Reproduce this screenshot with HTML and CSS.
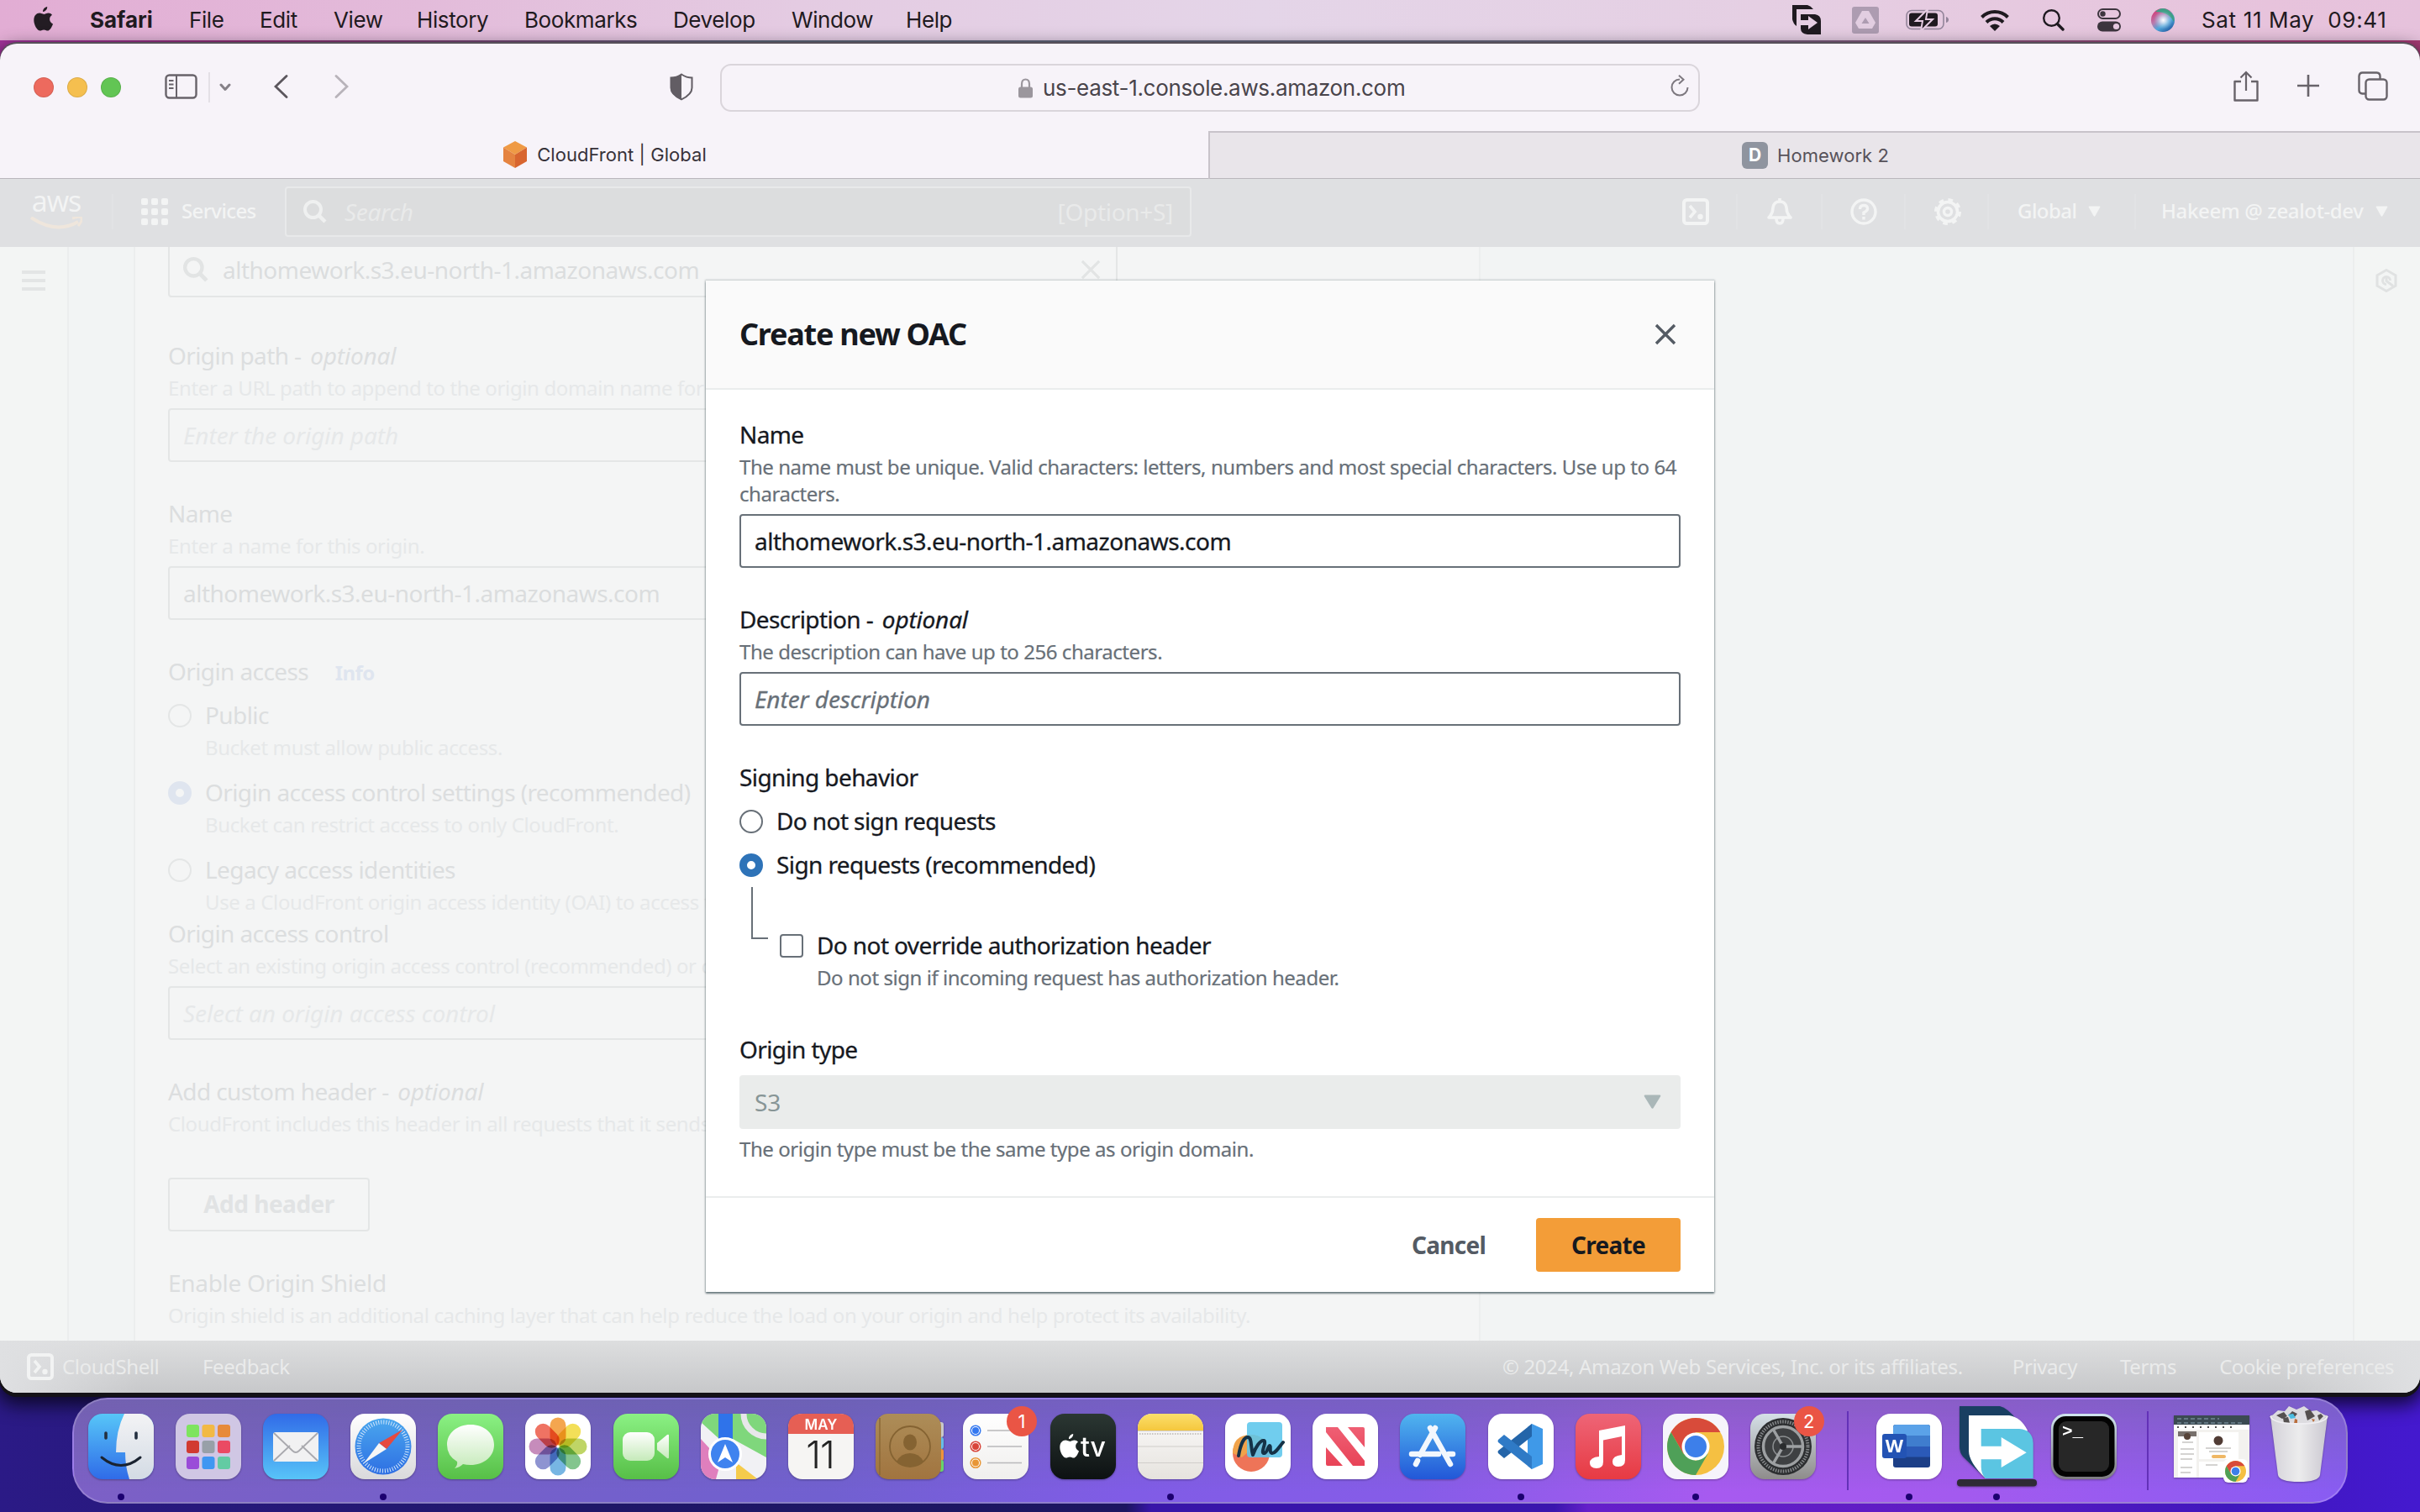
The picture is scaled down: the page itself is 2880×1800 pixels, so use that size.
FILE: index.html
```html
<!DOCTYPE html>
<html lang="en">
<head>
<meta charset="utf-8">
<title>CloudFront | Global</title>
<link rel="stylesheet" href="styles.css">
</head>
<body>
<svg width="0" height="0" class="defs">
  <defs>
    <linearGradient id="gFinder" x2="0" y2="1"><stop stop-color="#57c6f8"/><stop offset="1" stop-color="#2f6be8"/></linearGradient>
    <linearGradient id="gFinder2" x2="0" y2="1"><stop stop-color="#f3f3f5"/><stop offset="1" stop-color="#d3dbe4"/></linearGradient>
    <linearGradient id="gMail" x2="0" y2="1"><stop stop-color="#316be8"/><stop offset="1" stop-color="#58c4f8"/></linearGradient>
    <linearGradient id="gGreen" x2="0" y2="1"><stop stop-color="#8bf184"/><stop offset="1" stop-color="#57bf47"/></linearGradient>
    <linearGradient id="gWhite" x2="0" y2="1"><stop stop-color="#ffffff"/><stop offset="1" stop-color="#d9d9db"/></linearGradient>
    <linearGradient id="gPaper" x2="0" y2="1"><stop stop-color="#ffffff"/><stop offset="1" stop-color="#f0efed"/></linearGradient>
    <linearGradient id="gBubble" x2="0" y2="1"><stop stop-color="#ffffff"/><stop offset="1" stop-color="#c5eab9"/></linearGradient>
    <linearGradient id="gSafari" x2="0" y2="1"><stop stop-color="#4aa7ee"/><stop offset="1" stop-color="#2e6fe3"/></linearGradient>
    <linearGradient id="gTv" x2="0" y2="1"><stop stop-color="#2b3733"/><stop offset="1" stop-color="#0d1112"/></linearGradient>
    <linearGradient id="gNotes" x2="0" y2="1"><stop stop-color="#fbdf6c"/><stop offset="1" stop-color="#f5c73d"/></linearGradient>
    <linearGradient id="gNotes2" x2="0" y2="1"><stop stop-color="#fbfafa"/><stop offset="1" stop-color="#e6e3de"/></linearGradient>
    <linearGradient id="gStore" x2="0" y2="1"><stop stop-color="#50b5ef"/><stop offset="1" stop-color="#2257d8"/></linearGradient>
    <linearGradient id="gMusic" x2="0" y2="1"><stop stop-color="#ee6577"/><stop offset="1" stop-color="#e73a43"/></linearGradient>
    <linearGradient id="gBook" x2="0" y2="1"><stop stop-color="#ad8d58"/><stop offset="1" stop-color="#a1743f"/></linearGradient>
    <linearGradient id="gGear" x2="0" y2="1"><stop stop-color="#d5e0e7"/><stop offset="1" stop-color="#8e8c8b"/></linearGradient>
    <linearGradient id="gTerm" x2="0" y2="1"><stop stop-color="#cfe3ee"/><stop offset="1" stop-color="#7d7b80"/></linearGradient>
    <linearGradient id="gTrash" x2="1" y2="0"><stop stop-color="#d3d1d8"/><stop offset=".5" stop-color="#ececed"/><stop offset="1" stop-color="#cac7d0"/></linearGradient>
    <linearGradient id="gNews" x2="0" y2="1"><stop stop-color="#ef5f74"/><stop offset="1" stop-color="#e84357"/></linearGradient>
    <radialGradient id="gSiri"><stop stop-color="#ffffff"/><stop offset=".3" stop-color="#e3eef8" stop-opacity=".8"/><stop offset="1" stop-color="#9fc8e8" stop-opacity="0"/></radialGradient>
    <linearGradient id="gSiriBase" x1=".1" y1=".2" x2=".7" y2="1"><stop stop-color="#cf4680"/><stop offset=".35" stop-color="#b77cae"/><stop offset=".65" stop-color="#4fa8dc"/><stop offset="1" stop-color="#2862a8"/></linearGradient>
    <clipPath id="tile"><rect width="78" height="78" rx="17"/></clipPath>
    <symbol id="apple" viewBox="0 0 24 29" overflow="visible"><path d="M16.2 0c.3 2.900-2.300 6-5.200 6C10.700 3.100 13.500.3 16.200 0zM22 9.800c-4.300 2.700-3.600 8.700 1 10.600C21.700 24 19.300 28.500 16.700 28.500c-1.800 0-2.400-1.100-4.500-1.100s-2.800 1.100-4.500 1.100C4.300 28.500.3 21.500.3 15.900c0-5.300 3.300-8.300 6.700-8.300 2.100 0 3.900 1.300 5.200 1.300 1.200 0 3.100-1.400 5.600-1.400 1.500 0 3.100.8 4.200 2.300z"/></symbol>
    <symbol id="shell" viewBox="0 0 32 32"><rect x="2" y="2" width="28" height="28" rx="3.500" fill="none" stroke="currentColor" stroke-width="4"/><path d="M9 9l6 7-6 7" fill="none" stroke="currentColor" stroke-width="3.600"/><circle cx="21.500" cy="22" r="3.200" fill="currentColor"/></symbol>
    <symbol id="lens" viewBox="0 0 28 28"><circle cx="11.500" cy="11.500" r="9.500" fill="none" stroke="currentColor" stroke-width="4"/><path d="M18.500 18.500l7.500 7.500" stroke="currentColor" stroke-width="4.500"/></symbol>
    <symbol id="close" viewBox="0 0 26 26"><path d="M2 2l22 22M24 2L2 24" stroke="currentColor" stroke-width="3.400"/></symbol>
    <symbol id="caret" viewBox="0 0 16 14"><path d="M1.500.5h13q1.500 0 .7 1.500L9 13q-1 1.600-2 0L.8 2Q0 .5 1.500.5z" fill="currentColor"/></symbol>
    <symbol id="chrome" viewBox="0 0 68 68"><circle cx="34" cy="34" r="34" fill="#f5c042"/><path d="M4.600 17A34 34 0 0 1 63.400 17H34L19.300 42.500z" fill="#d84b3a"/><path d="M4.600 17A34 34 0 0 0 34 68L48.700 42.500 34 51 19.300 42.500z" fill="#4fa058"/><circle cx="34" cy="34" r="16.500" fill="#fff"/><circle cx="34" cy="34" r="13" fill="#3d7fea"/></symbol>
  </defs>
</svg>

<div class="desktop">
  <header class="menubar">
    <svg class="apple" width="24" height="29"><use href="#apple"/></svg>
    <nav class="menus"><b>Safari</b><span>File</span><span>Edit</span><span>View</span><span>History</span><span>Bookmarks</span><span>Develop</span><span>Window</span><span>Help</span></nav>
    <div class="status">
      <svg width="35" height="36"><path d="M0 0h18q4 1 7 5H5v20Q1 22 0 17z"/><path fill-rule="evenodd" d="M10 11h17q7 1 7 8v16H18q-8-1-8-7v-4h9v5l11-8-11-8v5h-9z"/></svg>
      <svg width="32" height="32"><rect width="32" height="32" rx="3" fill="#ad9cb1"/><path d="M12 5h8l8 14-4 7H8l-4-7z" fill="#e2cee1"/><path d="M16 13l4.500 7h-9z" fill="#ad9cb1"/></svg>
      <svg width="52" height="26"><rect x="1" y="1.500" width="44" height="22" rx="6" fill="none" stroke="#93849a" stroke-width="1.600"/><rect x="4" y="4.500" width="34" height="16" rx="3"/><path d="M48 9q3 1 3 3.500T48 16z" fill="#93849a"/><path d="M26 0L12 14h8l-2 12 14-14h-8z" stroke="#e5cce2" stroke-width="2"/></svg>
      <svg width="34" height="26"><path d="M1.500 9.500a22 22 0 0 1 31 0M7 15.500a14 14 0 0 1 20 0" fill="none" stroke="#1f1a20" stroke-width="4"/><path d="M11 20q6-5 12 0l-6 6z"/></svg>
      <svg width="26" height="26"><circle cx="10.500" cy="10.500" r="9.300" fill="none" stroke="#1f1a20" stroke-width="2.400"/><path d="M17.500 17.500l6.500 6.500" stroke="#1f1a20" stroke-width="3.400" stroke-linecap="round"/></svg>
      <svg width="28" height="28"><rect x="1" y="1" width="26" height="11" rx="5.500" fill="none" stroke="#3d353e" stroke-width="2"/><circle cx="6.500" cy="6.500" r="3.200" fill="#3d353e"/><rect y="15.500" width="28" height="12" rx="6" fill="#3d353e"/><circle cx="22.500" cy="21.500" r="3.600" fill="#e6c9e0"/></svg>
      <svg width="28" height="28"><circle cx="14" cy="14" r="14" fill="url(#gSiriBase)"/><path d="M5 4q9-8 18 0 6 6 4 12-6-12-22-12z" fill="#3f9f86"/><circle cx="14.500" cy="14" r="11" fill="url(#gSiri)"/></svg>
      <span class="clock">Sat 11 May&nbsp; 09:41</span>
    </div>
  </header>

  <main class="window">
    <section class="toolbar">
      <div class="lights"><i class="red"></i><i class="amber"></i><i class="green"></i></div>
      <svg class="sidebar-icon" width="40" height="30"><rect x="1.500" y="1.500" width="36" height="27" rx="4" fill="none" stroke="#68636a" stroke-width="2.400"/><path d="M14 1v28M5 8h5.500M5 12.500h5.500M5 17h5.500" stroke="#68636a" stroke-width="2"/></svg>
      <i class="split"></i>
      <svg class="chev" width="14" height="10"><path d="M2 2l5 5.500L12 2" fill="none" stroke="#858087" stroke-width="3" stroke-linecap="round" stroke-linejoin="round"/></svg>
      <svg class="back" width="17" height="28"><path d="M15 1.500L2 14l13 12.500" fill="none" stroke="#5b565d" stroke-width="2.800" stroke-linecap="round"/></svg>
      <svg class="fwd" width="17" height="28"><path d="M2 1.500L15 14 2 26.500" fill="none" stroke="#b8b3ba" stroke-width="2.800" stroke-linecap="round"/></svg>
      <svg class="shield" width="28" height="33"><path d="M14 1.500q6 4 12.500 4v12q0 8-12.500 13.800Q1.500 25.500 1.500 17.500v-12Q8 5.500 14 1.500z" fill="none" stroke="#625d64" stroke-width="2"/><path d="M14 1v31Q1 26 1 17.500v-12q7 0 13-4.500z" fill="#625d64"/></svg>
      <div class="url">
        <svg width="17" height="24"><path d="M4 11V7q0-5.500 4.500-5.500T13 7v4" fill="none" stroke="#9b969d" stroke-width="2.200"/><rect y="10.500" width="17" height="13" rx="2.500" fill="#9b969d"/></svg>
        <span>us-east-1.console.aws.amazon.com</span>
        <svg class="reload" width="22" height="27"><path d="M11 5.500A9.500 9.500 0 1 0 20.500 15" fill="none" stroke="#7d787f" stroke-width="2"/><path d="M10 .8l5.500 5-5.500 5" fill="none" stroke="#7d787f" stroke-width="2"/></svg>
      </div>
      <div class="right-tools">
        <svg width="30" height="37"><path d="M9 13H1.500v22.500h27V13H21" fill="none" stroke="#68636a" stroke-width="2.400" stroke-linejoin="round"/><path d="M15 24V2M8.500 8.500L15 2l6.500 6.500" fill="none" stroke="#68636a" stroke-width="2.200"/></svg>
        <svg width="28" height="28"><path d="M14 1v26M1 14h26" stroke="#68636a" stroke-width="2.600"/></svg>
        <svg width="36" height="35"><rect x="9.500" y="9.500" width="25" height="24" rx="4" fill="none" stroke="#68636a" stroke-width="2.400"/><path d="M9 26.500H5.500q-4-.500-4-4V5.500q.500-4 4-4h17q4 .5 4 4V9" fill="none" stroke="#68636a" stroke-width="2.400"/></svg>
      </div>
    </section>
    <section class="tabs">
      <div class="tab"><svg width="30" height="32"><path d="M15 0l14 7.500L15 16 1 7.500z" fill="#ef9a45"/><path d="M1 7.500L15 16v16L1 24z" fill="#e58340"/><path d="M29 7.500L15 16v16l14-8z" fill="#d8652f"/></svg><span>CloudFront | Global</span></div>
      <div class="tab idle"><i class="dicon">D</i><span>Homework 2</span></div>
    </section>

    <section class="awsnav">
      <div class="aws"><span>aws</span><svg width="62" height="15"><path d="M1 1q30 20 56 5" fill="none" stroke="#efe6dc" stroke-width="4"/><path d="M50 2q10-3 11 0t-4 9" fill="none" stroke="#efe6dc" stroke-width="3"/></svg></div>
      <i class="vr v1"></i>
      <svg class="grid9" width="32" height="32" fill="#f3f4f4"><rect width="8" height="8" rx="2"/><rect x="12" width="8" height="8" rx="2"/><rect x="24" width="8" height="8" rx="2"/><rect y="12" width="8" height="8" rx="2"/><rect x="12" y="12" width="8" height="8" rx="2"/><rect x="24" y="12" width="8" height="8" rx="2"/><rect y="24" width="8" height="8" rx="2"/><rect x="12" y="24" width="8" height="8" rx="2"/><rect x="24" y="24" width="8" height="8" rx="2"/></svg>
      <span class="services">Services</span>
      <div class="navsearch"><svg width="28" height="28"><use href="#lens"/></svg><em>Search</em><span>[Option+S]</span></div>
      <div class="navright">
        <span class="cell c1"><svg width="32" height="32"><use href="#shell"/></svg></span>
        <span class="cell c2"><svg width="32" height="32" fill="none" stroke="currentColor" stroke-width="3.600"><path d="M3 23q5-5 5-12 1-7 8-7t8 7q0 7 5 12z" stroke-linejoin="round"/><path d="M16 0v4M12 24q0 6 4 6t4-6"/></svg></span>
        <span class="cell c3"><svg width="32" height="32" fill="none" stroke="currentColor" stroke-width="3.400"><circle cx="16" cy="16" r="14"/><path d="M11.500 13q0-4.500 4.500-4.500t4.500 4q0 2.500-4.500 4.500v3M16 22v3.400"/></svg></span>
        <span class="cell c4"><svg width="32" height="32" fill="none" stroke="currentColor"><circle cx="16" cy="16" r="11.500" stroke-width="3.600"/><circle cx="16" cy="16" r="4.500" stroke-width="3.400"/><circle cx="16" cy="16" r="14" stroke-width="4" stroke-dasharray="5.500 5.496"/></svg></span>
        <span class="cell c5">Global<svg width="15" height="13"><use href="#caret"/></svg></span>
        <span class="cell c6">Hakeem @ zealot-dev<svg width="15" height="13"><use href="#caret"/></svg></span>
      </div>
    </section>

    <section class="console">
      <aside class="rail"><svg width="28" height="26"><path d="M0 3h28M0 13h28M0 23h28" stroke="#e3e5e5" stroke-width="4"/></svg></aside>
      <div class="gutter"></div>
      <div class="form">
        <div class="box search-box"><svg width="30" height="30"><use href="#lens"/></svg><span>althomework.s3.eu-north-1.amazonaws.com</span><svg class="x" width="24" height="24"><use href="#close"/></svg></div>
        <div class="field first"><label>Origin path - <em>optional</em></label><p>Enter a URL path to append to the origin domain name for</p><div class="box"><em>Enter the origin path</em></div></div>
        <div class="field"><label>Name</label><p>Enter a name for this origin.</p><div class="box">althomework.s3.eu-north-1.amazonaws.com</div></div>
        <div class="field"><label>Origin access <b class="info">Info</b></label>
          <div class="option"><i class="radio"></i><div><label>Public</label><p>Bucket must allow public access.</p></div></div>
          <div class="option second"><i class="radio on"></i><div><label>Origin access control settings (recommended)</label><p>Bucket can restrict access to only CloudFront.</p></div></div>
          <div class="option second"><i class="radio"></i><div><label>Legacy access identities</label><p>Use a CloudFront origin access identity (OAI) to access the</p></div></div>
        </div>
        <div class="field tight"><label>Origin access control</label><p>Select an existing origin access control (recommended) or create</p><div class="box"><em>Select an origin access control</em></div></div>
        <div class="field"><label>Add custom header - <em>optional</em></label><p>CloudFront includes this header in all requests that it sends</p></div>
        <div class="add">Add header</div>
        <div class="field"><label class="shield-label">Enable Origin Shield</label><p>Origin shield is an additional caching layer that can help reduce the load on your origin and help protect its availability.</p></div>
      </div>
      <div class="space"></div>
      <aside class="help"><svg width="28" height="28" fill="none" stroke="#e0e2e2" stroke-width="3"><path d="M14 1.500l11 6.300v12.400l-11 6.300-11-6.300V7.800z"/><path d="M14 9v5.500l8 6"/><path d="M18.500 14a4.500 4.500 0 1 0-4.500 4.500"/></svg></aside>
    </section>

    <footer class="foot">
      <svg width="32" height="32"><use href="#shell"/></svg><span class="f1">CloudShell</span><span class="f2">Feedback</span>
      <div class="legal"><span class="copy">© 2024, Amazon Web Services, Inc. or its affiliates.</span><span>Privacy</span><span>Terms</span><span>Cookie preferences</span></div>
    </footer>

    <div class="modal">
      <header><h2>Create new OAC</h2><svg width="26" height="26"><use href="#close"/></svg></header>
      <div class="content">
        <div class="field"><label>Name</label><p>The name must be unique. Valid characters: letters, numbers and most special characters. Use up to 64 characters.</p><div class="box">althomework.s3.eu-north-1.amazonaws.com</div></div>
        <div class="field"><label>Description - <em>optional</em></label><p>The description can have up to 256 characters.</p><div class="box"><em>Enter description</em></div></div>
        <div class="field"><label>Signing behavior</label>
          <div class="option"><i class="radio"></i><label>Do not sign requests</label></div>
          <div class="option"><i class="radio on"></i><label>Sign requests (recommended)</label></div>
          <div class="nested"><i class="branch"></i><i class="check"></i><div><label>Do not override authorization header</label><p>Do not sign if incoming request has authorization header.</p></div></div>
        </div>
        <div class="field wide-gap"><label>Origin type</label><div class="select"><span>S3</span><svg width="21" height="17" viewBox="0 0 16 14" preserveAspectRatio="none"><use href="#caret" width="16" height="14"/></svg></div><p class="constraint">The origin type must be the same type as origin domain.</p></div>
      </div>
      <div class="actions"><button class="cancel">Cancel</button><button class="create">Create</button></div>
    </div>
  </main>

  <nav class="dock">
    <div class="app run"><svg><g clip-path="url(#tile)"><rect width="78" height="78" fill="url(#gFinder)"/><path d="M43 0q-10 20-10 46h11q0 17 5 32h29V0z" fill="url(#gFinder2)"/></g><path d="M21 23v6M57 23v6" stroke="#243040" stroke-width="3.600" stroke-linecap="round"/><path d="M16 52q23 19 46 0" fill="none" stroke="#1a2330" stroke-width="3" stroke-linecap="round"/></svg></div>
    <div class="app"><svg><rect width="78" height="78" rx="17" fill="#d0c7e4"/><rect x="13" y="13" width="15" height="15" rx="3" fill="#7ee45f"/><rect x="31.500" y="13" width="15" height="15" rx="3" fill="#f2b945"/><rect x="50" y="13" width="15" height="15" rx="3" fill="#e78a3a"/><rect x="13" y="32" width="15" height="15" rx="3" fill="#d13a31"/><rect x="31.500" y="32" width="15" height="15" rx="3" fill="#98a0a8"/><rect x="50" y="32" width="15" height="15" rx="3" fill="#ea4a63"/><rect x="13" y="51" width="15" height="15" rx="3" fill="#9a4cd8"/><rect x="31.500" y="51" width="15" height="15" rx="3" fill="#3f97f2"/><rect x="50" y="51" width="15" height="15" rx="3" fill="#63cba3"/></svg></div>
    <div class="app"><svg><rect width="78" height="78" rx="17" fill="url(#gMail)"/><rect x="12" y="22" width="54" height="35" rx="3" fill="#f1f1f2"/><path d="M13 56l19-18M65 56L46 38M13 23l22 21q4 4 8 0l22-21" fill="none" stroke="#a9a9ae" stroke-width="1.800"/></svg></div>
    <div class="app run"><svg><rect width="78" height="78" rx="17" fill="url(#gWhite)"/><circle cx="39" cy="39" r="33.500" fill="url(#gSafari)"/><circle cx="39" cy="39" r="29" fill="none" stroke="#d3e7fb" stroke-width="5" stroke-dasharray="1 2.040"/><path d="M62 19L34 35l9 7z" fill="#e5493f"/><path d="M16 59l18-24 9 7z" fill="#f6f6f6"/></svg></div>
    <div class="app"><svg><rect width="78" height="78" rx="17" fill="url(#gGreen)"/><path d="M39 13c16 0 28 10 28 24S55 61 39 61q-5 0-9-1-4 4-10 5 4-4 3-8-12-7-12-20c0-14 12-24 28-24z" fill="url(#gBubble)"/></svg></div>
    <div class="app"><svg><rect width="78" height="78" rx="17" fill="#fff"/><g class="petals"><rect x="29.500" y="4.500" width="19" height="33" rx="9.500" fill="#f39c3c"/><rect x="29.500" y="4.500" width="19" height="33" rx="9.500" fill="#f2dc46" transform="rotate(45 39 39)"/><rect x="29.500" y="4.500" width="19" height="33" rx="9.500" fill="#b8d155" transform="rotate(90 39 39)"/><rect x="29.500" y="4.500" width="19" height="33" rx="9.500" fill="#75bf82" transform="rotate(135 39 39)"/><rect x="29.500" y="4.500" width="19" height="33" rx="9.500" fill="#68aee0" transform="rotate(180 39 39)"/><rect x="29.500" y="4.500" width="19" height="33" rx="9.500" fill="#8288cc" transform="rotate(225 39 39)"/><rect x="29.500" y="4.500" width="19" height="33" rx="9.500" fill="#c07fb4" transform="rotate(270 39 39)"/><rect x="29.500" y="4.500" width="19" height="33" rx="9.500" fill="#ee6452" transform="rotate(315 39 39)"/></g></svg></div>
    <div class="app"><svg><rect width="78" height="78" rx="17" fill="url(#gGreen)"/><rect x="11" y="22" width="38" height="34" rx="9" fill="url(#gBubble)"/><path d="M52 35l12-10q2-1 2 1v26q0 2-2 1L52 43z" fill="url(#gBubble)"/></svg></div>
    <div class="app"><svg><g clip-path="url(#tile)"><rect width="78" height="78" fill="#f1f1f4"/><path d="M0 0h22v30L0 10zM38 0h40v52L38 30z" fill="#7fd77c"/><path d="M0 30l24 26-6 22H0z" fill="#df7fbd"/><path d="M42 78V58l26 20z" fill="#f5cb4b"/><circle cx="78" cy="0" r="27" fill="none" stroke="#e7e7ea" stroke-width="7"/><path d="M21 0h17v40H21z" fill="#2f73ea"/></g><circle cx="29" cy="48" r="18.500" fill="#3f83ef" stroke="#fff" stroke-width="3"/><path d="M29 36l9 22-9-6-9 6z" fill="#fff"/></svg></div>
    <div class="app cal"><svg><rect width="78" height="78" rx="17" fill="#f6f5f3"/><path d="M0 24V17Q0 0 17 0h44q17 0 17 17v7z" fill="#e65f54"/><text x="39" y="18.500" class="cal-month">MAY</text><text x="38" y="65" class="cal-day">11</text></svg></div>
    <div class="app"><svg><rect x="70" y="10" width="11" height="18" rx="3" fill="#c9c9c9"/><rect x="70" y="28" width="11" height="14" rx="3" fill="#66bde8"/><rect x="70" y="42" width="11" height="14" rx="3" fill="#f0933c"/><rect x="70" y="55" width="11" height="14" rx="3" fill="#67d36c"/><rect width="78" height="78" rx="15" fill="url(#gBook)"/><path d="M5 5v68" stroke="#8b6835" stroke-width="1.500"/><circle cx="41" cy="39" r="24" fill="none" stroke="#856332" stroke-width="1.800"/><ellipse cx="41" cy="34" rx="8" ry="9.500" fill="#856332"/><path d="M25 57q5-10 16-10t16 10q-7 6-16 6t-16-6z" fill="#856332"/></svg></div>
    <div class="app"><svg><rect width="78" height="78" rx="17" fill="url(#gPaper)"/><path d="M29 20h41M29 39h41M29 58.500h41" stroke="#b9b9bb" stroke-width="1.500"/><g fill="#fff" stroke-width="1.500"><circle cx="15" cy="20" r="5.800" stroke="#3478f0"/><circle cx="15" cy="39" r="5.800" stroke="#d8453a"/><circle cx="15" cy="58.500" r="5.800" stroke="#e89636"/></g><circle cx="15" cy="20" r="4" fill="#3478f0"/><circle cx="15" cy="39" r="4" fill="#d8453a"/><circle cx="15" cy="58.500" r="4" fill="#e89636"/></svg><span class="badge">1</span></div>
    <div class="app"><svg><rect width="78" height="78" rx="17" fill="url(#gTv)"/><g transform="translate(11 24)" fill="#fff"><use href="#apple" width="24" height="29"/></g><text x="51" y="51" class="tv">tv</text></svg></div>
    <div class="app run"><svg><g clip-path="url(#tile)"><rect width="78" height="78" fill="url(#gNotes2)"/><rect width="78" height="20" fill="url(#gNotes)"/></g><path d="M0 20.500h78M0 39h78M0 58.500h78" stroke="#d0cdca" stroke-width="1.200"/><path d="M2 24h74" stroke="#b9b6b3" stroke-width="1.500" stroke-dasharray="1.500 1.500"/></svg></div>
    <div class="app"><svg><rect width="78" height="78" rx="17" fill="#fff"/><ellipse cx="31" cy="47" rx="22" ry="22" fill="#ee7458"/><path d="M9 47q0-22 22-22 8 0 14 5L20 52z" fill="#f0a24a"/><rect x="26" y="10" width="42" height="42" rx="4" fill="#5cc6ec" fill-opacity=".88"/><path d="M16 50C18 38 22 28 27 28S30 38 33 49C36 40 42 31 46 32S42 46 46 47 51 38 53 38 52 47 56 47 64 40 69 34" fill="none" stroke="#143247" stroke-width="4" stroke-linecap="round" stroke-linejoin="round"/></svg></div>
    <div class="app"><svg><rect width="78" height="78" rx="17" fill="#fff"/><path d="M16 16h14l32 40v6H48L16 22zM42 16h18q2 0 2 2v22zM16 40l20 22H18q-2 0-2-2z" fill="url(#gNews)"/></svg></div>
    <div class="app"><svg><rect width="78" height="78" rx="17" fill="url(#gStore)"/><g stroke="#f2f7fd" stroke-width="6.500" stroke-linecap="round"><path d="M42 17L24 49M36 17l24 43M14 48h32M58 48h5M21 56l-2 4"/></g></svg></div>
    <div class="app run"><svg><rect width="78" height="78" rx="17" fill="#fff"/><path d="M52 12l13 6v42l-13 6-5-4V16z" fill="#3f99e8"/><path d="M52 12v15L19 53l-7-6q-1-2 0-3z" fill="#2465a9"/><path d="M52 66V51L19 25l-7 6q-1 2 0 3z" fill="#2f7ac6"/></svg></div>
    <div class="app"><svg><rect width="78" height="78" rx="17" fill="url(#gMusic)"/><path d="M28 20l31-6v41q0 8-8 8-7 0-7-6 0-7 11-8V27l-22 4.500V57q0 8-8 8-8 0-8-6.500Q17 52 28 51z" fill="#fff"/></svg></div>
    <div class="app run"><svg><rect width="78" height="78" rx="17" fill="#f6f4fb"/><use href="#chrome" x="5" y="5" width="68" height="68"/></svg></div>
    <div class="app"><svg><rect width="78" height="78" rx="17" fill="url(#gGear)"/><circle cx="39" cy="39" r="34" fill="#2c2e30"/><circle cx="39" cy="39" r="29.500" fill="none" stroke="#85888a" stroke-width="4" stroke-dasharray="1.500 1.500"/><circle cx="39" cy="39" r="23.500" fill="#3e4042" stroke="#9da0a2" stroke-width="3.500"/><circle cx="39" cy="39" r="12" fill="none" stroke="#8d9092" stroke-width="1.500"/><path d="M39 39h23M39 39L27.500 59M39 39L27.500 19" stroke="#9da0a2" stroke-width="3.500"/><circle cx="39" cy="39" r="4" fill="#2a2c2e"/></svg><span class="badge">2</span></div>
    <i class="sep s1"></i>
    <div class="app run"><svg><rect width="78" height="78" rx="17" fill="#fff"/><rect x="20" y="13" width="44" height="51" rx="3" fill="#1c3f87"/><path d="M20 39h44v12.500H20z" fill="#2b5ab8"/><path d="M20 26h44v13H20z" fill="#3f7dce"/><path d="M23 13h38q3 0 3 3v10H20V16q0-3 3-3z" fill="#5ba2e8"/><rect x="7" y="24" width="29" height="29" rx="3" fill="#2353b4"/><text x="21.500" y="46" class="word">W</text></svg></div>
    <div class="app run"><svg><path d="M-5-9h48q9 2 20 16L26 77-1 51q-4-5-4-12z" fill="#193f62"/><path d="M6 2h48q14 2 22 18L26 77Q6 58 6 44z" fill="#fff"/><path d="M20.700 18H66q16 1 16.700 17v42H26q-5.300-5-5.300-14z" fill="#5bc5e2"/><path d="M20 38.700h24.700V28l30 18.300-30 17.700v-9.700H20z" fill="#fff"/><rect x="-8" y="78" width="95" height="8.500" rx="4" fill="#2e2b35"/></svg></div>
    <div class="app"><svg><rect width="78" height="78" rx="17" fill="url(#gTerm)"/><rect x="2.500" y="3" width="73" height="72" rx="15" fill="#030303"/><rect x="9" y="9" width="60" height="60" rx="9" fill="#272727"/><text x="13" y="27" class="prompt">&gt;_</text></svg></div>
    <i class="sep s2"></i>
    <div class="app"><svg><g transform="translate(-6 2)"><rect width="90" height="74" fill="#f3f2ef"/><rect width="90" height="11" fill="#3b4a52"/><rect y="11" width="90" height="6" fill="#fff"/><rect x="5" y="20" width="22" height="54" fill="#fff"/><rect x="30" y="20" width="47" height="32" fill="#fff"/><rect x="30" y="55" width="47" height="19" fill="#fff"/><rect x="5" y="19" width="22" height="6" fill="#77706b"/><circle cx="16" cy="25" r="4" fill="#574439"/><circle cx="53" cy="30" r="5.500" fill="#513c35"/><rect x="45" y="47" width="17" height="4" rx="2" fill="#efb765"/><path d="M38 39h30M42 43h22M10 32h13M8 40h16M8 46h16M8 52h14M8 62h14M8 68h12M38 59h14" stroke="#aaa7a4" stroke-width="1.200"/><path d="M4 4h50M4 9h80" stroke="#8ca6b5" stroke-width="1" stroke-dasharray="5 3"/><path d="M4 14h66" stroke="#555" stroke-width="2" stroke-dasharray="2 7"/></g><rect x="53" y="54" width="29" height="28" rx="6" fill="#fff"/><use href="#chrome" x="55" y="56" width="25" height="25"/></svg></div>
    <div class="app"><svg><path d="M5 2q34-4 68 0l-9 71q-2 8-25 8t-25-8z" fill="url(#gTrash)"/><path d="M6 3l8-7 8 1 5-6 9 4 9-4 8 6 7-1 12 7-10 8H18z" fill="#dddce0"/><path d="M12 2l9-4 4 5-6 3zM31-3l6 3-4 5-7-3zM46-3l6-2 6 8-9 5zM61 2l4-2 3 3-5 5zM20 5l6-1 2 7h-7z" fill="#55504f"/><path d="M26 1l6-1 3 5-6 1z" fill="#4bbde0"/><path d="M34 6l3 1v5h-4zM54 6l4 1-2 3z" fill="#b96e3c"/><path d="M5 3q3 9 34 9t34-9" fill="none" stroke="#efeef2" stroke-width="1.800"/></svg></div>
  </nav>
</div>
</body>
</html>
```
FILE: styles.css
```css
* { box-sizing: border-box; margin: 0; }
body { width: 2880px; height: 1800px; overflow: hidden; font-family: "Noto Sans", sans-serif; }
i { font-style: normal; }
svg { display: block; flex: none; }
.defs { position: absolute; }
label, p { display: block; }

.desktop {
  height: 1800px;
  display: flex;
  flex-direction: column;
  background:
    linear-gradient(90deg, #a2339a 0, #8c2c70 300px, #5d6577 900px, #6d6a80 1900px, #a63a74 2800px) 0 0 / 100% 90px no-repeat,
    linear-gradient(90deg, #2b1a86 0, #1f1768 700px, #1c1660 1340px, #3816a8 1370px, #3a16ae 1850px, #651fca 1890px, #5f1cc4 2300px, #4017bd 2650px, #4419cf 2880px);
}

/* menu bar */
.menubar {
  height: 48px;
  display: flex;
  align-items: center;
  padding-left: 40px;
  font: 400 26px/46px Inter, sans-serif;
  color: #1f1a20;
  background: linear-gradient(90deg, #e2add4, #e3bbda 500px, #e4cbe2 950px, #e4d5e8 1500px, #e5cfe3 2100px, #e7c3dc 2700px, #e6c2dc);
}
.apple { fill: #231c23; margin-top: -3px; }
.menus {
  display: grid;
  grid-template-columns: 118px 84px 88px 99px 128px 177px 141px 136px 60px;
  margin-left: 43px;
  letter-spacing: -0.4px;
}
.menus b { letter-spacing: 0; }
.status {
  display: grid;
  grid-template-columns: 71px 64px 89px 74px 65px 64px 60px 260px;
  align-items: center;
  margin-left: 995px;
  fill: #1f1a20;
}
.clock { letter-spacing: 0.65px; white-space: nowrap; }

/* browser window */
.window {
  position: relative;
  height: 1606px;
  margin-top: 4px;
  flex: none;
  display: flex;
  flex-direction: column;
  border-radius: 20px;
  background: #f7f3f9;
  box-shadow: 0 -2px 0 #57505a, 0 4px 0 1px #141217, 0 10px 22px 4px rgba(5, 4, 15, .8);
}
.toolbar { height: 104px; display: flex; align-items: center; padding-left: 40px; }
.lights { display: flex; gap: 16px; }
.lights i { width: 24px; height: 24px; border-radius: 50%; border: 1px solid rgba(0, 0, 0, .1); }
.red { background: #ed6a5e; }
.amber { background: #f5bf4f; }
.green { background: #62c554; }
.sidebar-icon { margin: -2px 0 0 52px; }
.split { width: 2px; height: 36px; margin-left: 12px; background: #e4e0e6; }
.chev { margin-left: 11px; }
.back { margin: -3px 0 0 51px; }
.fwd { margin: -3px 0 0 55px; }
.shield { margin: -2px 0 0 382px; }
.url {
  width: 1166px;
  height: 57px;
  margin-left: 32px;
  display: flex;
  align-items: center;
  padding-left: 353px;
  border: 2px solid #dad5db;
  border-radius: 13px;
  font: 400 26px/52px Inter, sans-serif;
  letter-spacing: -0.32px;
  color: #49444b;
}
.url span { margin-left: 12px; padding-top: 2px; }
.url svg:first-child { margin-top: 1px; }
.reload { margin-left: auto; margin-right: 11px; margin-top: -4px; }
.right-tools { display: flex; align-items: center; gap: 45px; margin: -4px 0 0 635px; }

.tabs { height: 57px; display: grid; grid-template-columns: 1438px 1442px; }
.tab {
  display: flex;
  align-items: center;
  justify-content: center;
  gap: 11px;
  padding-left: 1px;
  border-bottom: 2px solid #bab6bc;
  font: 400 22px/54px Inter, sans-serif;
  letter-spacing: .05px;
  color: #37323a;
}
.tab.idle { background: #e9e5ea; border-top: 2px solid #c8c3ca; border-left: 2px solid #c8c3ca; color: #57525a; }
.dicon {
  width: 31px;
  height: 32px;
  border-radius: 6px;
  background: #8f949f;
  color: #fff;
  font: 700 21px/32px Inter, sans-serif;
  text-align: center;
}

/* faded AWS console behind the dialog */
.awsnav {
  height: 81px;
  flex: none;
  display: flex;
  align-items: center;
  padding: 0 0 3px 36px;
  background: #dfe0e2;
  color: #f3f4f4;
  font-size: 24px;
  line-height: 32px;
  font-weight: 500;
  letter-spacing: -0.3px;
}
.aws { width: 62px; text-align: center; }
.aws span { display: block; font: 500 34px/25px "Open Sans", sans-serif; letter-spacing: -1px; margin-top: -4px; padding-bottom: 6px; }
.vr { width: 2px; height: 42px; margin-left: 35px; background: #e2e3e5; }
.grid9 { margin-left: 33px; }
.services { margin-left: 16px; font-weight: 500; letter-spacing: -0.6px; width: 123px; padding-bottom: 2px; }
.navsearch {
  width: 1079px;
  height: 60px;
  display: flex;
  align-items: center;
  padding: 0 20px;
  border: 2px solid #e8e9ea;
  border-radius: 4px;
  background: #dcddde;
  font-size: 28px;
  font-weight: 400;
  color: #e9eaea;
}
.navsearch svg { color: #eff0f0; }
.navsearch em { margin-left: 21px; flex: 1; }
.navright { display: flex; margin-left: 552px; height: 42px; }
.cell { display: flex; align-items: center; border-right: 2px solid #e2e3e5; white-space: nowrap; }
.c1 { width: 98px; padding-left: 32px; }
.c2 { width: 101px; padding-left: 34px; }
.c3 { width: 99px; padding-left: 33px; }
.c4 { width: 99px; padding-left: 34px; }
.c5, .c6 { line-height: 40px; padding-bottom: 2px; }
.c5 { width: 175px; padding-left: 34px; letter-spacing: -0.55px; }
.c6 { border: 0; padding-left: 30px; letter-spacing: -0.35px; }
.c5 svg, .c6 svg { margin-left: 14px; }

.console {
  height: 1302px;
  flex: none;
  display: grid;
  grid-template-columns: 82px 79px 1601px 1038px 80px;
  background: #f2f4f4;
  color: #dcdedf;
  overflow: hidden;
}
.rail { background: #f3f5f4; border-right: 2px solid #eceeee; padding: 27px 0 0 26px; }
.gutter { border-right: 2px solid #eceeee; }
.form { background: #f4f5f5; border-right: 2px solid #eceeee; padding-left: 39px; white-space: nowrap; }
.help { background: #f3f5f4; border-left: 2px solid #eceeee; padding: 26px 0 0 24px; }

/* form fields, shared by the page and the dialog */
.field { margin-top: 40px; }
.field label { font-size: 28px; line-height: 42px; padding-bottom: 2px; letter-spacing: -0.6px; }
.field label em { letter-spacing: -0.2px; margin-left: 4px; }
.field p { font-size: 24px; line-height: 32px; letter-spacing: -0.45px; }
.field p::first-line { line-height: 32px; }
.box {
  height: 64px;
  display: flex;
  align-items: center;
  margin-top: 8px;
  padding: 0 16px 1px;
  border: 2px solid #e4e6e6;
  border-radius: 4px;
  font-size: 28px;
  letter-spacing: -0.5px;
}
.box em { letter-spacing: -0.08px; }
.form .field.first { margin-top: 48px; }
.form .field.tight { margin-top: 0; }
.form p, .form .box em { color: #e6e8e9; }
.form p { letter-spacing: -0.37px; }
.form .shield-label { letter-spacing: -0.3px; }
.form .box { width: 1130px; color: #dbddde; }
.form .search-box { margin-top: -4px; padding-bottom: 2px; }
.search-box svg { color: #e2e4e4; }
.search-box span { margin-left: 17px; flex: 1; }
.search-box .x { margin-right: 2px; }
.info { font-size: 24px; line-height: 0; letter-spacing: -0.6px; color: #dfe5ef; margin-left: 25px; }
.option { display: flex; margin-top: 8px; }
.option.second { margin-top: 16px; }
.radio {
  width: 28px;
  height: 28px;
  flex: none;
  margin: 8px 16px 0 0;
  border: 2px solid #e4e6e6;
  border-radius: 50%;
}
.radio.on { border: 9px solid #dfe5ef; }
.add {
  width: 240px;
  height: 64px;
  margin-top: 48px;
  border: 2px solid #e4e6e6;
  border-radius: 4px;
  font-size: 28px;
  font-weight: 700;
  line-height: 58px;
  text-align: center;
  color: #e1e3e4;
  letter-spacing: -0.5px;
}

.foot {
  height: 62px;
  display: flex;
  align-items: center;
  padding-left: 32px;
  border-radius: 0 0 20px 20px;
  background:
    linear-gradient(90deg, #dfe0e2, rgba(223, 224, 226, 0) 170px, rgba(223, 224, 226, 0) 2710px, #dfe0e2),
    linear-gradient(#dddedf, #c7c8ca);
  color: #eaebeb;
  font-size: 24px;
  letter-spacing: -0.4px;
}
.foot svg { color: #f2f3f3; }
.foot span { padding-bottom: 1px; }
.f1 { margin-left: 10px; width: 167px; }
.legal { margin-left: auto; margin-right: 31px; display: flex; gap: 51px; }
.copy { letter-spacing: -0.33px; margin-right: 8px; }
.legal span:last-child { letter-spacing: -0.5px; }

/* dialog */
.modal {
  position: absolute;
  left: 840px;
  top: 282px;
  width: 1200px;
  height: 1204px;
  background: #fff;
  color: #16191f;
  box-shadow: 0 2px 2px rgba(0, 28, 36, .5), 0 0 2px 1px rgba(0, 28, 36, .2);
}
.modal header {
  height: 130px;
  display: flex;
  align-items: center;
  justify-content: space-between;
  padding: 0 45px 0 40px;
  background: #fafafa;
  border-bottom: 2px solid #eaeded;
}
.modal header svg { color: #545b64; }
h2 { font-size: 36px; line-height: 44px; letter-spacing: -1.25px; }
.content { padding: 32px 40px 40px; }
.modal .field:first-child { margin-top: 0; }
.modal .field.wide-gap { margin-top: 48px; }
.modal .field label { font-weight: 400; -webkit-text-stroke: .3px currentColor; }
.modal .field p { color: #687078; -webkit-text-stroke: .2px currentColor; }
.modal .box { border-color: #687078; -webkit-text-stroke: .3px currentColor; }
.modal .box em { color: #687078; }
.modal .radio { border-color: #687078; }
.modal .radio.on { border-color: #2e73b8; }
.nested { display: flex; padding-left: 14px; margin-top: 4px; }
.branch { width: 20px; height: 62px; border: solid #687078; border-width: 0 0 2px 2px; margin-right: 14px; }
.check { width: 28px; height: 28px; margin: 56px 16px 0 0; border: 2px solid #687078; border-radius: 4px; }
.nested > div { margin-top: 48px; }
.select {
  height: 64px;
  display: flex;
  align-items: center;
  justify-content: space-between;
  margin-top: 8px;
  padding: 0 23px 1px 18px;
  border-radius: 4px;
  background: #eaeceb;
  font-size: 28px;
  color: #879596;
}
.select svg { color: #aab7b8; }
.constraint { margin-top: 8px; }
.actions { height: 114px; border-top: 2px solid #eaeded; padding: 24px 40px; display: flex; justify-content: flex-end; gap: 18px; }
.actions button {
  height: 64px;
  border: 0;
  border-radius: 4px;
  background: none;
  font: 700 28px/60px "Noto Sans", sans-serif;
  letter-spacing: -0.75px;
  color: #545b64;
}
.actions .cancel { width: 172px; }
.actions .create { width: 172px; background: #f39d38; color: #16191f; }

/* dock */
.dock {
  position: relative;
  height: 126px;
  flex: none;
  margin: 6px 86px 0;
  padding-left: 4px;
  display: flex;
  align-items: flex-start;
  border: 2px solid rgba(255, 255, 255, .2);
  border-radius: 42px;
  background:
    linear-gradient(rgba(104, 98, 150, .45), rgba(104, 98, 150, 0) 90%),
    linear-gradient(90deg, #7c60c6, #7460ca 500px, #7160d0 900px, #805ce6 1250px, #865ce8 1600px, #a75af0 1950px, #a35aef 2250px, #885cf2 2708px);
}
.app { position: relative; width: 104.1px; height: 122px; padding: 17px 13px 0; flex: none; }
.app svg { width: 78px; height: 78px; overflow: visible; filter: drop-shadow(0 1px 1px rgba(0, 0, 0, .3)); }
.run::after {
  content: "";
  position: absolute;
  left: 48px;
  top: 112px;
  width: 8px;
  height: 8px;
  border-radius: 50%;
  background: #1c0070;
}
.sep { width: 2px; height: 94px; margin-top: 14px; background: #6331b8; }
.s1 { margin-left: 24px; margin-right: 20px; }
.s2 { margin-left: 23px; margin-right: 23px; }
.badge {
  position: absolute;
  left: 65px;
  top: 8px;
  width: 36px;
  height: 36px;
  border-radius: 50%;
  background: #ea5545;
  color: #fff;
  font: 400 22px/36px Inter, sans-serif;
  text-align: center;
}
.petals rect { mix-blend-mode: multiply; opacity: .9; }
.cal-month { font: 600 17px Inter, sans-serif; fill: #fff; text-anchor: middle; }
.cal-day { font: 300 45px Inter, sans-serif; fill: #232323; text-anchor: middle; letter-spacing: -1px; }
.tv { font: 500 32px Inter, sans-serif; fill: #fff; text-anchor: middle; }
.word { font: 700 22px "Open Sans", sans-serif; fill: #fff; text-anchor: middle; }
.prompt { font: 700 21px "Liberation Mono", monospace; fill: #fff; }
```
